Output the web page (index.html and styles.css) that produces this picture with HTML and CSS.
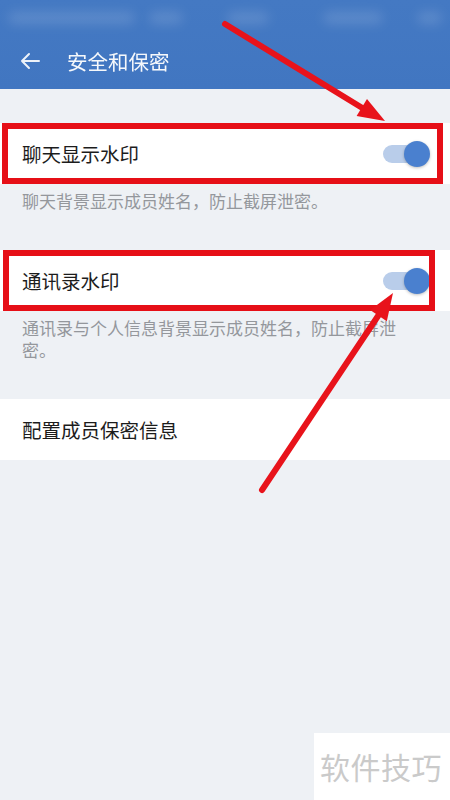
FILE: index.html
```html
<!DOCTYPE html>
<html lang="zh-CN">
<head>
    <meta charset="UTF-8">
    <meta name="viewport" content="width=device-width, initial-scale=1.0">
    <title>安全和保密</title>
    <link rel="stylesheet" href="styles.css">
</head>
<body>
    <header class="app-header">
        <div class="status-bar">
            <span class="blob blob-a"></span>
            <span class="blob blob-b"></span>
            <span class="blob blob-c"></span>
            <span class="blob blob-d"></span>
            <span class="blob blob-e"></span>
        </div>
        <div class="toolbar">
            <svg class="back-icon" width="22" height="22" viewBox="0 0 22 22">
                <path d="M20 11H3M10 4L3 11l7 7" fill="none" stroke="#fff" stroke-width="2" stroke-linecap="round" stroke-linejoin="round" opacity="0.9"/>
            </svg>
            <h1 class="title">安全和保密</h1>
        </div>
    </header>

    <main class="settings">
        <div class="row">
            <span class="row-label">聊天显示水印</span>
            <span class="switch on"><span class="knob"></span></span>
        </div>
        <p class="desc">聊天背景显示成员姓名，防止截屏泄密。</p>

        <div class="row">
            <span class="row-label">通讯录水印</span>
            <span class="switch on"><span class="knob"></span></span>
        </div>
        <p class="desc">通讯录与个人信息背景显示成员姓名，防止截屏泄密。</p>

        <div class="row">
            <span class="row-label">配置成员保密信息</span>
        </div>
    </main>

    <!-- 标注层 -->
    <svg class="annotations" width="450" height="800" viewBox="0 0 450 800">
        <rect x="5" y="126" width="435" height="55" fill="none" stroke="#e60f17" stroke-width="6"/>
        <rect x="6" y="253" width="426" height="55" fill="none" stroke="#e60f17" stroke-width="6"/>
        <line x1="225" y1="24" x2="364" y2="109" stroke="#e8131b" stroke-width="6" stroke-linecap="round"/>
        <polygon points="385,121 356.6,116 367,99" fill="#e8131b"/>
        <line x1="262" y1="490" x2="380" y2="313" stroke="#e8131b" stroke-width="6" stroke-linecap="round"/>
        <polygon points="393,293 386.8,321.2 370.2,310" fill="#e8131b"/>
    </svg>

    <div class="watermark">软件技巧</div>
</body>
</html>
```

FILE: styles.css
```css
* {
    margin: 0;
    padding: 0;
    box-sizing: border-box;
}

body {
    font-family: "Noto Sans CJK SC", "Noto Sans", sans-serif;
    background: #eef1f5;
    width: 450px;
    height: 800px;
    overflow: hidden;
    position: relative;
}

.app-header {
    background: linear-gradient(180deg, #4479c3 0%, #4176c1 100%);
    height: 89px;
}

.status-bar {
    height: 35px;
    display: flex;
    align-items: center;
    padding: 0 8px;
    gap: 14px;
}

.blob {
    height: 12px;
    border-radius: 6px;
    background: rgba(255, 255, 255, 0.14);
    filter: blur(6px);
}

.blob-a { width: 150px; }
.blob-b { width: 40px; }
.blob-c { width: 50px; margin-left: 30px; }
.blob-d { width: 70px; margin-left: 40px; }
.blob-e { width: 30px; margin-left: 20px; }

.toolbar {
    height: 54px;
    display: flex;
    align-items: center;
    padding-left: 19px;
    padding-bottom: 2px;
}

.title {
    margin-left: 26px;
    font-size: 20.5px;
    font-weight: 400;
    color: #fff;
    opacity: 0.95;
}

.settings {
    padding-top: 34px;
}

.row {
    height: 61px;
    background: #fff;
    display: flex;
    align-items: center;
    justify-content: space-between;
    padding: 0 20px 0 22px;
}

.row-label {
    font-size: 19.5px;
    color: #1c1c1c;
}

.desc {
    font-size: 17px;
    line-height: 22px;
    color: #94979c;
    padding: 6px 42px 38px 22px;
}

.switch {
    width: 47px;
    height: 26px;
    position: relative;
    display: inline-block;
}

.switch::before {
    content: "";
    position: absolute;
    left: 0;
    top: 4px;
    width: 40px;
    height: 18px;
    border-radius: 9px;
    background: #b9cdea;
}

.knob {
    position: absolute;
    right: 0;
    top: 0;
    width: 26px;
    height: 26px;
    border-radius: 50%;
    background: #4a80cf;
    box-shadow: 0 1px 3px rgba(0, 0, 0, 0.25);
}

.annotations {
    position: absolute;
    left: 0;
    top: 0;
    pointer-events: none;
}

.watermark {
    position: absolute;
    right: 0;
    bottom: 0;
    width: 136px;
    height: 67px;
    background: #fff;
    color: #cacaca;
    font-size: 30px;
    line-height: 67px;
    padding-left: 6px;
    letter-spacing: 0.5px;
}
```
